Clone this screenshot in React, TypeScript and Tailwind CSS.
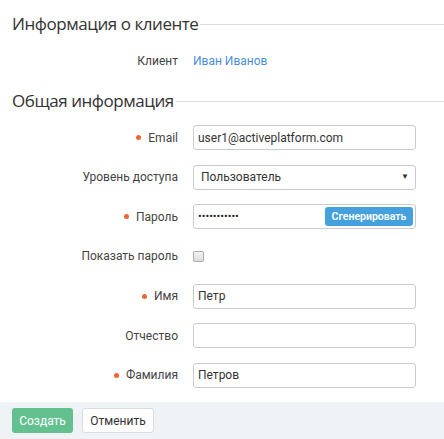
import React from "react"

const labelFont = { fontFamily: "Roboto, 'Liberation Sans', sans-serif" }

const Heading = ({ title }: { title: string }) => (
  <div className="flex items-center gap-[2px] h-[24px]">
    <h2 className="text-[17px] tracking-[-0.45px] leading-none text-[#333] font-['Open_Sans',sans-serif] whitespace-nowrap">
      {title}
    </h2>
    <div className="h-px flex-1 bg-[#dcdcdc] mt-[3px]" />
  </div>
)

const Label = ({ text, required }: { text: string; required?: boolean }) => (
  <div className="w-[166px] shrink-0 flex items-center justify-end gap-[7px] text-[12px] text-[#444]">
    {required && <span className="w-[5px] h-[5px] rounded-full bg-[#f26336]" />}
    <span>{text}</span>
  </div>
)

const inputCls =
  "w-[223px] h-[25px] rounded-[3px] border border-[#c8ccd1] bg-white px-[4px] text-[12px] text-[#333] outline-none"

const Row = ({ children }: { children: React.ReactNode }) => (
  <div className="flex items-center gap-[15px] h-[25px]">{children}</div>
)

export default function App() {
  return (
    <div className="w-[444px] h-[439px] bg-white flex flex-col" style={labelFont}>
      <div className="pl-[12px] pt-[11px]">
        <Heading title="Информация о клиенте" />
        <div className="flex items-center gap-[15px] h-[25px] mt-[13px]">
          <Label text="Клиент" />
          <span className="text-[12px] text-[#4a8edb]">Иван Иванов</span>
        </div>
        <div className="mt-[15px]">
          <Heading title="Общая информация" />
        </div>
        <div className="flex flex-col gap-[14.66px] mt-[13px] pr-[28px]">
          <Row>
            <Label text="Email" required />
            <input className={inputCls} defaultValue="user1@activeplatform.com" />
          </Row>
          <Row>
            <Label text="Уровень доступа" />
            <div className={inputCls + " flex items-center justify-between pl-[7px] pr-[6px]"}>
              <span>Пользователь</span>
              <span className="text-[8px] text-[#333]">▼</span>
            </div>
          </Row>
          <Row>
            <Label text="Пароль" required />
            <div className={inputCls + " flex items-center justify-between pl-[4px] pr-[2px]"}>
              <span className="text-[11px] leading-none text-[#222]">•••••••••••</span>
              <button className="h-[19px] w-[88px] rounded-[3px] bg-[#45a1de] text-white text-[10.5px] font-semibold">
                Сгенерировать
              </button>
            </div>
          </Row>
          <Row>
            <Label text="Показать пароль" />
            <span className="w-[11px] h-[11px] rounded-[2px] border border-[#a9adb2] bg-gradient-to-b from-[#f4f4f4] to-[#dcdcdc]" />
          </Row>
          <Row>
            <Label text="Имя" required />
            <input className={inputCls} defaultValue="Петр" />
          </Row>
          <Row>
            <Label text="Отчество" />
            <input className={inputCls} defaultValue="" />
          </Row>
          <Row>
            <Label text="Фамилия" required />
            <input className={inputCls} defaultValue="Петров" />
          </Row>
        </div>
      </div>
      <div className="mt-auto h-[37px] bg-[#f0f3f6] flex items-center gap-[9px] pl-[12px]">
        <button className="h-[25px] w-[61px] rounded-[3px] bg-[#62c18f] text-white text-[12px]">
          Создать
        </button>
        <button className="h-[25px] w-[72px] rounded-[3px] bg-white border border-[#d9dde1] text-[#333] text-[12px]">
          Отменить
        </button>
      </div>
    </div>
  )
}
